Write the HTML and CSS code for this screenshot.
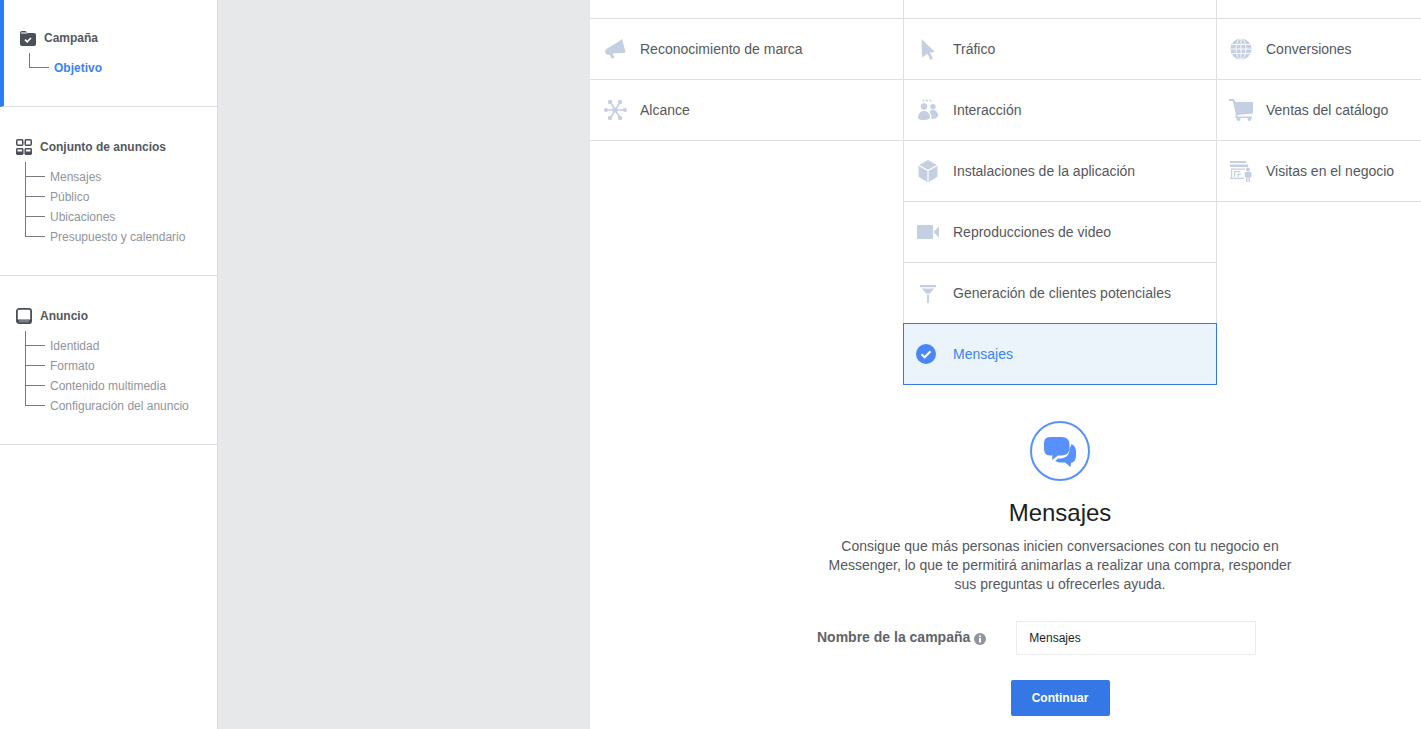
FILE: index.html
```html
<!DOCTYPE html>
<html lang="es">
<head>
    <meta charset="UTF-8">
    <title>Objetivo de la campaña</title>
    <link rel="stylesheet" href="styles.css">
</head>
<body>
<div class="page">
    <!-- menu lateral -->
    <nav class="sidebar">
        <section class="nav-section nav-section-active">
            <div class="nav-title">
                <svg class="nav-icon" viewBox="0 0 16 16"><path fill="#4b4f56" d="M0 3a2 2 0 0 1 2-2h3.500l2 2H14a2 2 0 0 1 2 2v9a2 2 0 0 1-2 2H2a2 2 0 0 1-2-2z"/><path fill="#fff" d="M1 2.600h5.800l.8.9H1z"/><path fill="none" stroke="#fff" stroke-width="1.600" d="M5 9.600l2.200 2.200L11 8"/></svg>
                <span>Campaña</span>
            </div>
            <ul class="nav-tree">
                <li class="nav-current">Objetivo</li>
            </ul>
        </section>
        <section class="nav-section">
            <div class="nav-title">
                <svg class="nav-icon" viewBox="0 0 16 16"><g fill="none" stroke="#4b4f56" stroke-width="1.500"><rect x=".75" y=".75" width="6" height="5.500" rx="1"/><rect x="9.250" y=".75" width="6" height="5.500" rx="1"/></g><g fill="#4b4f56"><rect y="9" width="7.500" height="7" rx="1.400"/><rect x="8.500" y="9" width="7.500" height="7" rx="1.400"/></g><g fill="#fff"><rect x="1.500" y="10.500" width="4.500" height="2"/><rect x="10" y="10.500" width="4.500" height="2"/></g></svg>
                <span>Conjunto de anuncios</span>
            </div>
            <ul class="nav-tree">
                <li>Mensajes</li>
                <li>Público</li>
                <li>Ubicaciones</li>
                <li>Presupuesto y calendario</li>
            </ul>
        </section>
        <section class="nav-section">
            <div class="nav-title">
                <svg class="nav-icon" viewBox="0 0 16 16"><rect x=".9" y=".9" width="14.200" height="14.200" rx="2.200" fill="none" stroke="#4b4f56" stroke-width="1.800"/><rect x="1" y="11.500" width="14" height="3" fill="#4b4f56"/><rect x="3" y="12.600" width="10" height=".8" fill="#c4c6ca"/></svg>
                <span>Anuncio</span>
            </div>
            <ul class="nav-tree">
                <li>Identidad</li>
                <li>Formato</li>
                <li>Contenido multimedia</li>
                <li>Configuración del anuncio</li>
            </ul>
        </section>
    </nav>

    <div class="gutter"></div>

    <main class="content">
        <div class="objectives">
            <div class="objective-col objective-col-first">
                <div class="objective-stub"></div>
                <div class="objective">
                    <svg class="objective-icon" viewBox="0 0 24 24"><path d="M1 15c0-2 1-3 3-4l10-6 4-3 3.500 13-1.500 1-9.500.3-5 1.500C3 18.300 1.300 17 1 15z"/><path d="M5.500 17.500l3-.8 2 3.800-2.800 1.300z"/></svg>
                    <span>Reconocimiento de marca</span>
                </div>
                <div class="objective">
                    <svg class="objective-icon" viewBox="0 0 24 24"><g stroke="#c5cfe2" stroke-width="1.600"><path d="M1.800 12h19.400M6 3.500l10.500 17M16.500 3.500L6 20.500"/></g><circle cx="11" cy="12" r="2.600"/><circle cx="2" cy="12" r="2"/><circle cx="21" cy="12" r="2"/><circle cx="6" cy="4" r="2.200"/><circle cx="16" cy="4" r="2.200"/><circle cx="6" cy="20" r="2.200"/><circle cx="16" cy="20" r="2.200"/></svg>
                    <span>Alcance</span>
                </div>
            </div>

            <div class="objective-col objective-col-middle">
                <div class="objective-stub"></div>
                <div class="objective">
                    <svg class="objective-icon" viewBox="0 0 24 24"><path d="M5.500 2L19 15l-5 .4 3 6.300-2.600 1.300-2.800-6.300L6 20.500z"/></svg>
                    <span>Tráfico</span>
                </div>
                <div class="objective">
                    <svg class="objective-icon" viewBox="0 0 24 24"><circle cx="7.500" cy="2.500" r="1"/><circle cx="11" cy="2.500" r="1"/><circle cx="14.500" cy="2.500" r="1"/><circle cx="8" cy="8.500" r="3.200"/><circle cx="17" cy="8.800" r="2.700"/><path d="M2 20c0-4.500 2.700-7 6-7s6 2.500 6 6c0 2-2 3-6 3s-6-.5-6-2z"/><path d="M15.500 21c.4-3-.5-5.300-2.200-7.200 1-1.200 2.300-1.800 3.700-1.800 2.900 0 5 2.400 5 5.500 0 2-3 3.500-6.500 3.500z"/></svg>
                    <span>Interacción</span>
                </div>
                <div class="objective">
                    <svg class="objective-icon" viewBox="0 0 24 24"><path d="M12 1l9.500 5.200v11.600L12 23.500l-9.500-5.700V6.200z"/><path d="M2.500 6.200l9.500 5.300 9.500-5.300M12 11.500v12" fill="none" stroke="#fff" stroke-width="1.200"/></svg>
                    <span>Instalaciones de la aplicación</span>
                </div>
                <div class="objective">
                    <svg class="objective-icon" viewBox="0 0 24 24"><rect x="1" y="5" width="16" height="14" rx=".8"/><path d="M17.500 12l5.500-5.500v11z"/></svg>
                    <span>Reproducciones de video</span>
                </div>
                <div class="objective">
                    <svg class="objective-icon" viewBox="0 0 24 24"><path d="M4 4h16v2.200H4zM5.800 7.400h12.400L14 12.500H10zM10.800 13.500h2.400l-.4 8.500h-1.600z"/></svg>
                    <span>Generación de clientes potenciales</span>
                </div>
                <div class="objective objective-selected">
                    <svg class="objective-icon" viewBox="0 0 24 24"><circle cx="10" cy="12" r="10" fill="#4a86f7"/><path d="M5.500 12.300l3.200 3 5.800-6" fill="none" stroke="#fff" stroke-width="2.200"/></svg>
                    <span>Mensajes</span>
                </div>
            </div>

            <div class="objective-col">
                <div class="objective-stub"></div>
                <div class="objective">
                    <svg class="objective-icon" viewBox="0 0 24 24"><circle cx="12" cy="12" r="10.500"/><g fill="none" stroke="#fff" stroke-width=".9"><path d="M1.500 12h21M3 7.500h18M3 16.500h18M12 1.500v21"/><ellipse cx="12" cy="12" rx="5" ry="10.500"/></g></svg>
                    <span>Conversiones</span>
                </div>
                <div class="objective">
                    <svg class="objective-icon" viewBox="0 0 24 24"><path d="M0 1h5l1.500 3H24v11.500L8.500 17l-.3 1.500H23V20H6.500l.3-4L3.800 3H0z"/><circle cx="9.500" cy="21" r="2"/><circle cx="20.500" cy="21" r="2"/></svg>
                    <span>Ventas del catálogo</span>
                </div>
                <div class="objective">
                    <svg class="objective-icon" viewBox="0 0 24 24"><path d="M1 2h16v2H1zM1 5.500h18v2.500H1zM2 9.500h14v1.300H3.200v8H15V20H1v-1.200h1zM5 12h6v1.200H6.200V18H5zM8.500 14.500H12v1.200H9.700V18H8.500z"/><circle cx="19" cy="10.500" r="2"/><path d="M15.500 14.500c0-1 1-1.800 3.500-1.800s3.500.8 3.500 1.800V18h-1.500v5h-1.500v-4.500h-1V23h-1.500v-5h-1z"/></svg>
                    <span>Visitas en el negocio</span>
                </div>
            </div>
        </div>

        <div class="detail">
            <svg class="detail-icon" viewBox="0 0 60 60">
                <circle cx="30" cy="30" r="29" fill="none" stroke="#5890ff" stroke-width="2"/>
                <path fill="#5890ff" d="M20 16h12c4.500 0 7.500 3 7.500 7v4c0 4.500-3 7.500-7.500 7.500h-4l-6 4.500.5-4.500H20c-4.500 0-6-3-6-7.500v-4c0-4 1.500-7 6-7z"/>
                <path fill="#5890ff" d="M41.500 23c3 1.500 4.500 4 4.500 7.500v4c0 4-1.500 6.500-5 7.500l-.5 4-5.500-4.500h-5c-2 0-3.300-.6-4.500-1.700l2.500-2.300h2c6 0 9.500-3.500 9.500-9.500z"/>
            </svg>
            <h2 class="detail-title">Mensajes</h2>
            <p class="detail-text">Consigue que más personas inicien conversaciones con tu negocio en Messenger, lo que te permitirá animarlas a realizar una compra, responder sus preguntas u ofrecerles ayuda.</p>
            <div class="name-row">
                <label class="name-label" for="campaignName">Nombre de la campaña</label>
                <svg class="info-icon" viewBox="0 0 12 12"><circle cx="6" cy="6" r="6" fill="#90949c"/><rect x="5" y="5" width="2" height="4.500" fill="#fff"/><circle cx="6" cy="3.300" r="1.100" fill="#fff"/></svg>
                <input class="name-input" id="campaignName" type="text" value="Mensajes">
            </div>
            <button class="continue-btn" type="button">Continuar</button>
        </div>
    </main>
</div>
</body>
</html>
```

FILE: styles.css
```css
html, body {
    margin: 0;
    height: 100%;
    overflow: hidden;
}
body {
    background-color: #fff;
    color: #55585e;
    font-family: "Liberation Sans", Arial, sans-serif;
}
.page {
    display: flex;
    height: 729px;
}

/* menu lateral */
.sidebar {
    width: 218px;
    flex-shrink: 0;
    box-sizing: border-box;
    border-right: 1px solid #d8d9db;
}
.nav-section {
    padding: 32px 0 28px 16px;
    border-bottom: 1px solid #dddfe2;
}
.nav-section-active {
    padding: 30px 0 28px 16px;
    border-left: 4px solid #2d7ff0;
}
.nav-title {
    display: flex;
    align-items: center;
    gap: 8px;
    height: 16px;
    font-size: 12px;
    font-weight: bold;
}
.nav-icon {
    width: 16px;
    height: 16px;
    flex-shrink: 0;
}
.nav-tree {
    list-style: none;
    margin: 12px 0 0 9px;
    padding: 0;
}
.nav-tree li {
    display: flex;
    gap: 5px;
    height: 20px;
    line-height: 20px;
    font-size: 12px;
    color: #90949c;
}
.nav-tree li::before {
    content: "";
    box-sizing: border-box;
    width: 20px;
    height: 20px;
    margin-top: -10px;
    flex-shrink: 0;
    border-left: 1px solid #767a80;
    border-bottom: 1px solid #767a80;
}
.nav-tree li:first-child::before {
    height: 15px;
    margin-top: -5px;
}
.nav-tree .nav-current {
    color: #3b82f6;
    font-weight: bold;
}

.gutter {
    width: 372px;
    flex-shrink: 0;
    background-color: #e7e8ea;
}

.content {
    flex: 1;
    min-width: 0;
}

/* tabla de objetivos */
.objectives {
    display: flex;
    align-items: flex-start;
}
.objective-col {
    flex: 1;
    min-width: 0;
}
.objective-col-first {
    flex: none;
    width: 313px;
}
.objective-col-middle {
    flex: none;
    width: 314px;
}
.objective-stub {
    height: 19px;
    box-sizing: border-box;
    border-bottom: 1px solid #dddfe2;
}
.objective-col-middle .objective-stub,
.objective-col-middle .objective {
    border-left: 1px solid #dddfe2;
    border-right: 1px solid #dddfe2;
}
.objective {
    display: flex;
    align-items: center;
    gap: 13px;
    box-sizing: border-box;
    height: 61px;
    padding-left: 12px;
    border-bottom: 1px solid #dddfe2;
    font-size: 14px;
}
.objective-col-first .objective {
    gap: 12px;
    padding-left: 14px;
}
.objective-icon {
    width: 24px;
    height: 24px;
    flex-shrink: 0;
    fill: #c5cfe2;
}
.objective-col-middle .objective-selected {
    height: 62px;
    margin-top: -1px;
    border: 1px solid #3578e5;
    padding-left: 12px;
    background-color: #ebf3fb;
    color: #3b82f6;
}

/* detalle */
.detail {
    width: 500px;
    margin: 36px 0 0 220px;
    display: flex;
    flex-direction: column;
    align-items: center;
}
.detail-icon {
    width: 60px;
    height: 60px;
}
.detail-title {
    margin: 18px 0 10px;
    font-size: 24px;
    line-height: 28px;
    font-weight: normal;
    color: #1c1e21;
}
.detail-text {
    margin: 0;
    width: 480px;
    font-size: 14px;
    line-height: 19px;
    text-align: center;
}
.name-row {
    display: flex;
    align-items: center;
    align-self: flex-start;
    margin: 27px 0 0 7px;
}
.name-label {
    margin-bottom: 2px;
    font-size: 14px;
    font-weight: bold;
    color: #606368;
}
.info-icon {
    width: 12px;
    height: 12px;
    margin: 1px 30px 0 4px;
}
.name-input {
    width: 240px;
    height: 34px;
    box-sizing: border-box;
    padding: 0 12px;
    border: 1px solid #e9ebee;
    background: #fff;
    color: #1c1e21;
    font-family: inherit;
    font-size: 12px;
    outline: none;
}
.continue-btn {
    width: 99px;
    height: 36px;
    margin-top: 25px;
    border: none;
    border-radius: 2px;
    background-color: #3578e5;
    color: #fff;
    font-family: inherit;
    font-size: 12px;
    font-weight: bold;
    cursor: pointer;
}
```
